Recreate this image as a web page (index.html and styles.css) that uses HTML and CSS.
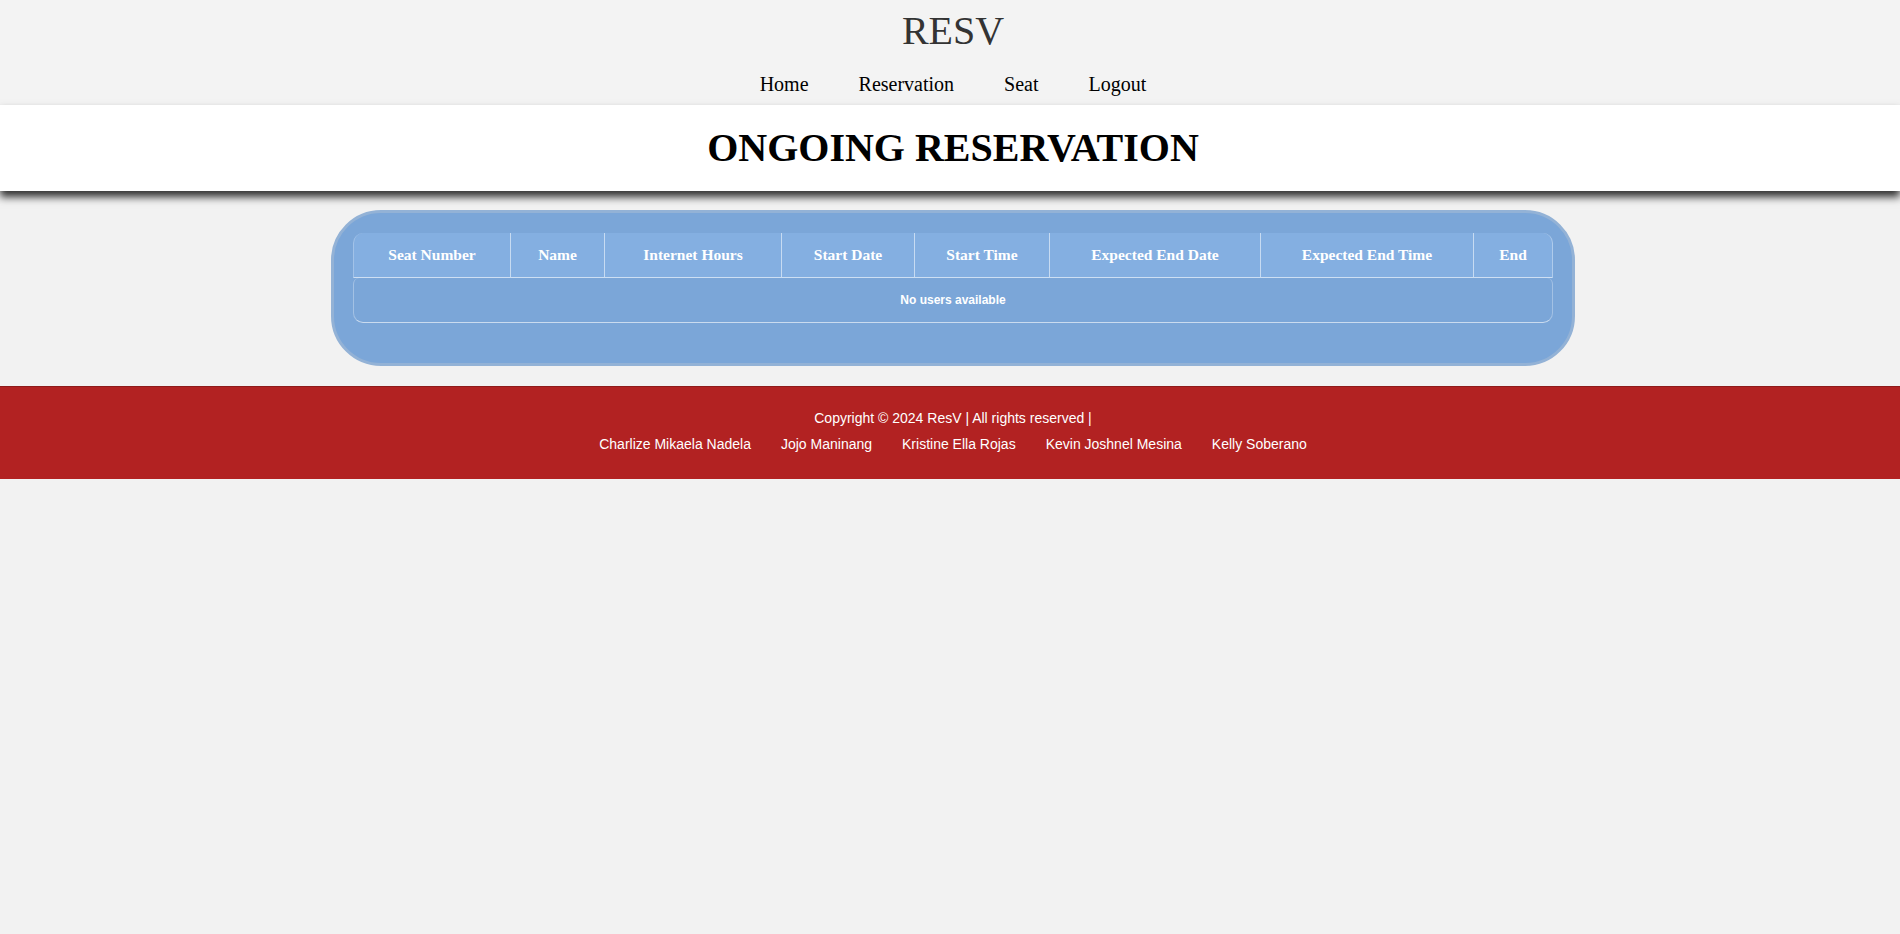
FILE: index.html
```html
<!DOCTYPE html>
<html lang="en">
<head>
<meta charset="utf-8">
<title>ResV - Ongoing Reservation</title>
<link rel="stylesheet" href="styles.css">
</head>
<body>
<header class="site-header">
  <h1 class="brand">RESV</h1>
  <nav class="main-nav">
    <a href="#" class="nav-link">Home</a>
    <a href="#" class="nav-link">Reservation</a>
    <a href="#" class="nav-link">Seat</a>
    <a href="#" class="nav-link">Logout</a>
  </nav>
</header>
<section class="title-band">
  <h2 class="page-title">ONGOING RESERVATION</h2>
</section>
<main class="content">
  <div class="table-card">
    <table class="res-table">
      <thead>
        <tr>
          <th class="c-seat">Seat Number</th>
          <th class="c-name">Name</th>
          <th class="c-hours">Internet Hours</th>
          <th class="c-sdate">Start Date</th>
          <th class="c-stime">Start Time</th>
          <th class="c-edate">Expected End Date</th>
          <th class="c-etime">Expected End Time</th>
          <th class="c-end">End</th>
        </tr>
      </thead>
      <tbody>
        <tr>
          <td colspan="8" class="empty">No users available</td>
        </tr>
      </tbody>
    </table>
  </div>
</main>
<footer class="site-footer">
  <p class="copy">Copyright © 2024 ResV | All rights reserved |</p>
  <div class="names">
    <span class="name">Charlize Mikaela Nadela</span>
    <span class="name">Jojo Maninang</span>
    <span class="name">Kristine Ella Rojas</span>
    <span class="name">Kevin Joshnel Mesina</span>
    <span class="name">Kelly Soberano</span>
  </div>
</footer>
</body>
</html>
```
FILE: styles.css
```css
html, body {
  margin: 0;
  padding: 0;
}
body {
  background: #f2f2f2;
  font-family: "Liberation Serif", "Times New Roman", serif;
  color: #000;
}
.site-header {
  background: #f3f3f3;
  padding: 7px 0 9px 6px;
  text-align: center;
}
.brand {
  margin: 0;
  font-size: 40px;
  font-weight: normal;
  line-height: normal;
  color: #333;
}
.main-nav {
  display: flex;
  justify-content: center;
  gap: 50px;
  margin-top: 19px;
}
.nav-link {
  font-size: 20px;
  color: #000;
  text-decoration: none;
  line-height: normal;
}
.title-band {
  background: #fff;
  padding: 19px 0 20px 6px;
  text-align: center;
  box-shadow: 0 6px 8px rgba(0, 0, 0, 0.8);
  position: relative;
}
.page-title {
  margin: 0;
  font-size: 40px;
  font-weight: bold;
  line-height: normal;
  color: #000;
}
.content {
  padding: 19px 0 0 6px;
  display: flex;
  justify-content: center;
}
.table-card {
  width: 1200px;
  background: #7ba6d8;
  border: 3px solid #93b2d6;
  border-radius: 50px;
  padding: 20px 19px 40px;
}
.res-table {
  width: 1200px;
  table-layout: fixed;
  border-collapse: separate;
  border-spacing: 0;
  font-family: "Liberation Serif", Georgia, serif;
}
.res-table th {
  box-sizing: border-box;
  height: 45px;
  background: #84afe1;
  color: #fff;
  font-size: 15.5px;
  font-weight: bold;
  text-align: center;
  padding: 0;
  border-right: 1px solid rgba(255, 255, 255, 0.55);
  border-bottom: 1px solid rgba(255, 255, 255, 0.6);
}
.res-table th:first-child {
  border-top-left-radius: 10px;
  border-left: 1px solid rgba(255, 255, 255, 0.25);
}
.res-table th:last-child {
  border-top-right-radius: 10px;
  border-right: 1px solid rgba(255, 255, 255, 0.35);
}
.c-seat { width: 158px; }
.c-name { width: 94px; }
.c-hours { width: 177px; }
.c-sdate { width: 133px; }
.c-stime { width: 135px; }
.c-edate { width: 211px; }
.c-etime { width: 213px; }
.c-end { width: 79px; }
.res-table td.empty {
  height: 45px;
  box-sizing: border-box;
  text-align: center;
  color: #fff;
  font-family: "Liberation Sans", Arial, sans-serif;
  font-size: 12px;
  font-weight: bold;
  border-left: 1px solid rgba(255, 255, 255, 0.3);
  border-right: 1px solid rgba(255, 255, 255, 0.3);
  border-bottom: 1px solid rgba(255, 255, 255, 0.6);
  border-radius: 6px 6px 10px 10px;
  padding: 0;
}
.site-footer {
  margin-top: 20px;
  background: #b22222;
  border-top: 1px solid #8e1b1b;
  padding: 23px 0 27px 6px;
  text-align: center;
  color: #fff;
  font-family: "Liberation Sans", Arial, sans-serif;
  font-size: 14px;
}
.copy {
  margin: 0;
  line-height: normal;
}
.names {
  display: flex;
  justify-content: center;
  gap: 30px;
  margin-top: 10px;
  line-height: normal;
}
```
